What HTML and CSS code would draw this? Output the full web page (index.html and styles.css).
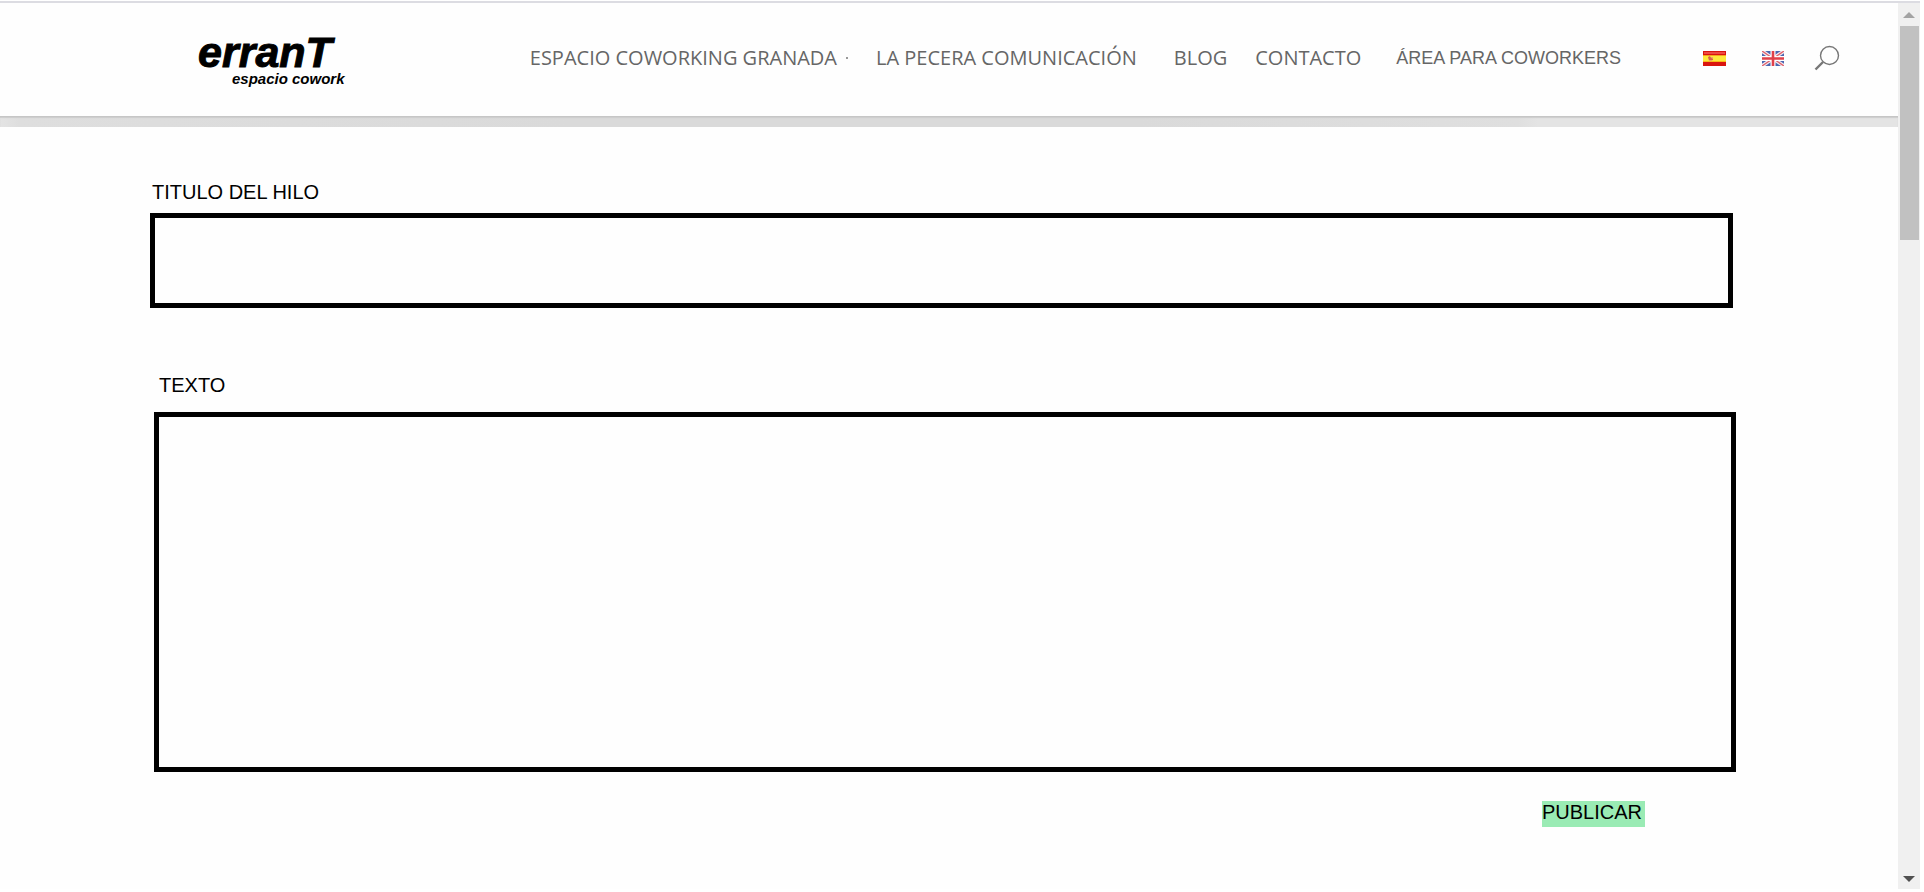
FILE: index.html
```html
<!DOCTYPE html>
<html lang="es">
<head>
<meta charset="utf-8">
<meta name="viewport" content="width=device-width, initial-scale=1">
<title>erranT espacio cowork</title>
<link rel="stylesheet" href="styles.css">
</head>
<body>
<div class="window">
  <div class="page">
    <header class="header">
      <a class="logo" href="#">
        <span class="logo-name">erranT</span>
        <span class="logo-sub">espacio cowork</span>
      </a>
      <nav class="nav">
        <a class="nav-link nav-espacio" href="#">ESPACIO COWORKING GRANADA <span class="marker"></span></a>
        <a class="nav-link nav-pecera" href="#">LA PECERA COMUNICACIÓN</a>
        <a class="nav-link nav-blog" href="#">BLOG</a>
        <a class="nav-link nav-contacto" href="#">CONTACTO</a>
        <a class="nav-link nav-area" href="#">ÁREA PARA COWORKERS</a>
        <a class="flag flag-es" href="#" aria-label="Español">
          <svg width="23" height="15" viewBox="0 0 23 15"><rect width="23" height="15" fill="#d9150f"/><rect y="4" width="23" height="7" fill="#fde93a"/><rect y="4" width="23" height="1" fill="#f6a21c"/><rect y="10" width="23" height="1" fill="#f8b81c"/><rect x="1" y="1" width="21" height="2" fill="#ef4a42"/><path d="M5 6h5v3q-2 2-4 1z" fill="#f0a860"/><path d="M5 6l2-1 1 2 2 1v1H6z" fill="#d9604a"/></svg>
        </a>
        <a class="flag flag-en" href="#" aria-label="English">
          <svg width="22" height="15" viewBox="0 0 22 15"><rect width="22" height="15" fill="#4a66b0"/><path d="M0 0L22 15M22 0L0 15" stroke="#f3e9ef" stroke-width="3.6"/><path d="M0 0L22 15M22 0L0 15" stroke="#e0606a" stroke-width="1.3"/><path d="M11 0V15M0 7.5H22" stroke="#fff" stroke-width="5"/><path d="M11 0V15M0 7.5H22" stroke="#e0404a" stroke-width="2.6"/></svg>
        </a>
        <button class="search" type="button" aria-label="Buscar">
          <svg width="26" height="26" viewBox="0 0 26 26" fill="none" stroke="#777"><circle cx="15.5" cy="10.5" r="9" stroke-width="1.4"/><path d="M9 17L1.5 24.5" stroke-width="2.4"/></svg>
        </button>
      </nav>
    </header>
    <div class="band"></div>
    <form class="form">
      <div class="field field-title">
        <label for="titulo">TITULO DEL HILO</label>
        <input id="titulo" type="text">
      </div>
      <div class="field field-text">
        <label for="texto">TEXTO</label>
        <textarea id="texto"></textarea>
      </div>
      <button class="publish" type="button">PUBLICAR</button>
    </form>
  </div>
  <div class="scrollbar" aria-hidden="true">
    <svg width="12" height="6" viewBox="0 0 12 6"><path d="M0 6L6 0L12 6z" fill="#a3a3a3"/></svg>
    <div class="thumb"></div>
    <svg width="12" height="6" viewBox="0 0 12 6"><path d="M0 0L6 6L12 0z" fill="#505050"/></svg>
  </div>
</div>
</body>
</html>
```
FILE: styles.css
```css
* {
  box-sizing: border-box;
}

body {
  margin: 0;
  padding: 1px 4px 3px 0;
  background: #fff;
  font-family: "Liberation Sans", Arial, sans-serif;
  color: #000;
}

.window {
  display: flex;
  min-height: calc(100vh - 4px);
  border-top: 2px solid #dcdce2;
}

.page {
  flex: 1;
  min-width: 0;
  background: #fefefe;
}

.header {
  display: flex;
  justify-content: space-between;
  height: 114px;
  padding: 0 58px 0 198px;
  border-bottom: 1px solid #c6c6c6;
}

.logo {
  display: flex;
  flex-direction: column;
  padding-top: 29px;
  color: #000;
  font-weight: bold;
  font-style: italic;
  text-decoration: none;
}

.logo-name {
  font-size: 43px;
  line-height: 40px;
  -webkit-text-stroke: 1px #000;
}

.logo-sub {
  padding-left: 34px;
  font-size: 15px;
  line-height: 14px;
}

.nav {
  display: flex;
  align-items: center;
  height: 110px;
}

.nav-link {
  color: #666;
  font-family: "Open Sans", sans-serif;
  font-size: 20px;
  line-height: 26px;
  text-decoration: none;
  white-space: nowrap;
}

.nav-espacio {
  display: flex;
  align-items: center;
  gap: 9px;
  margin-right: 28px;
}

.marker {
  width: 2px;
  height: 2px;
  background: #999;
}

.nav-pecera {
  margin-right: 37px;
}

.nav-blog {
  margin-right: 28px;
}

.nav-contacto {
  margin-right: 35px;
}

.nav-area {
  margin-right: 82px;
  font-family: "Liberation Sans", Arial, sans-serif;
  font-size: 18px;
}

.flag {
  display: flex;
  margin-right: 36px;
}

.flag-en {
  margin-right: 30px;
}

.search {
  display: flex;
  padding: 0;
  border: 0;
  background: none;
}

.band {
  height: 10px;
  background: linear-gradient(to right, #e4e4e4 0, #dedede 1%, #dadada 30%, #dadada 60%, #dfdfdf 80%, #e4e4e4 81%, #e4e4e4 100%);
  box-shadow: inset 0 1px 1px #ccc;
}

.form {
  display: flex;
  flex-direction: column;
  padding: 53px 162px 0 150px;
  font-size: 20px;
  line-height: 24px;
}

.field {
  display: flex;
  flex-direction: column;
}

.field-title {
  margin-right: 3px;
}

.field-title label {
  padding: 0 2px 9px;
}

.field-text {
  padding: 65px 0 0 4px;
}

.field-text label {
  padding: 0 5px 15px;
}

input,
textarea {
  width: 100%;
  padding: 12px;
  border: 5px solid #000;
  border-radius: 0;
  background: #fefefe;
  font: inherit;
  resize: none;
  outline: 0;
}

input {
  height: 95px;
}

textarea {
  height: 360px;
}

.publish {
  align-self: flex-end;
  margin: 29px 91px 0 0;
  padding: 0 3px 4px 0;
  border: 0;
  background: #9aebb4;
  color: #000;
  font: inherit;
  line-height: 22px;
}

.scrollbar {
  display: flex;
  flex-direction: column;
  align-items: center;
  width: 22px;
  padding: 9px 0 7px;
  background: #f0f0f0;
}

.thumb {
  width: 19px;
  height: 214px;
  margin: 8px 0 auto;
  background: #c1c1c1;
}
```
